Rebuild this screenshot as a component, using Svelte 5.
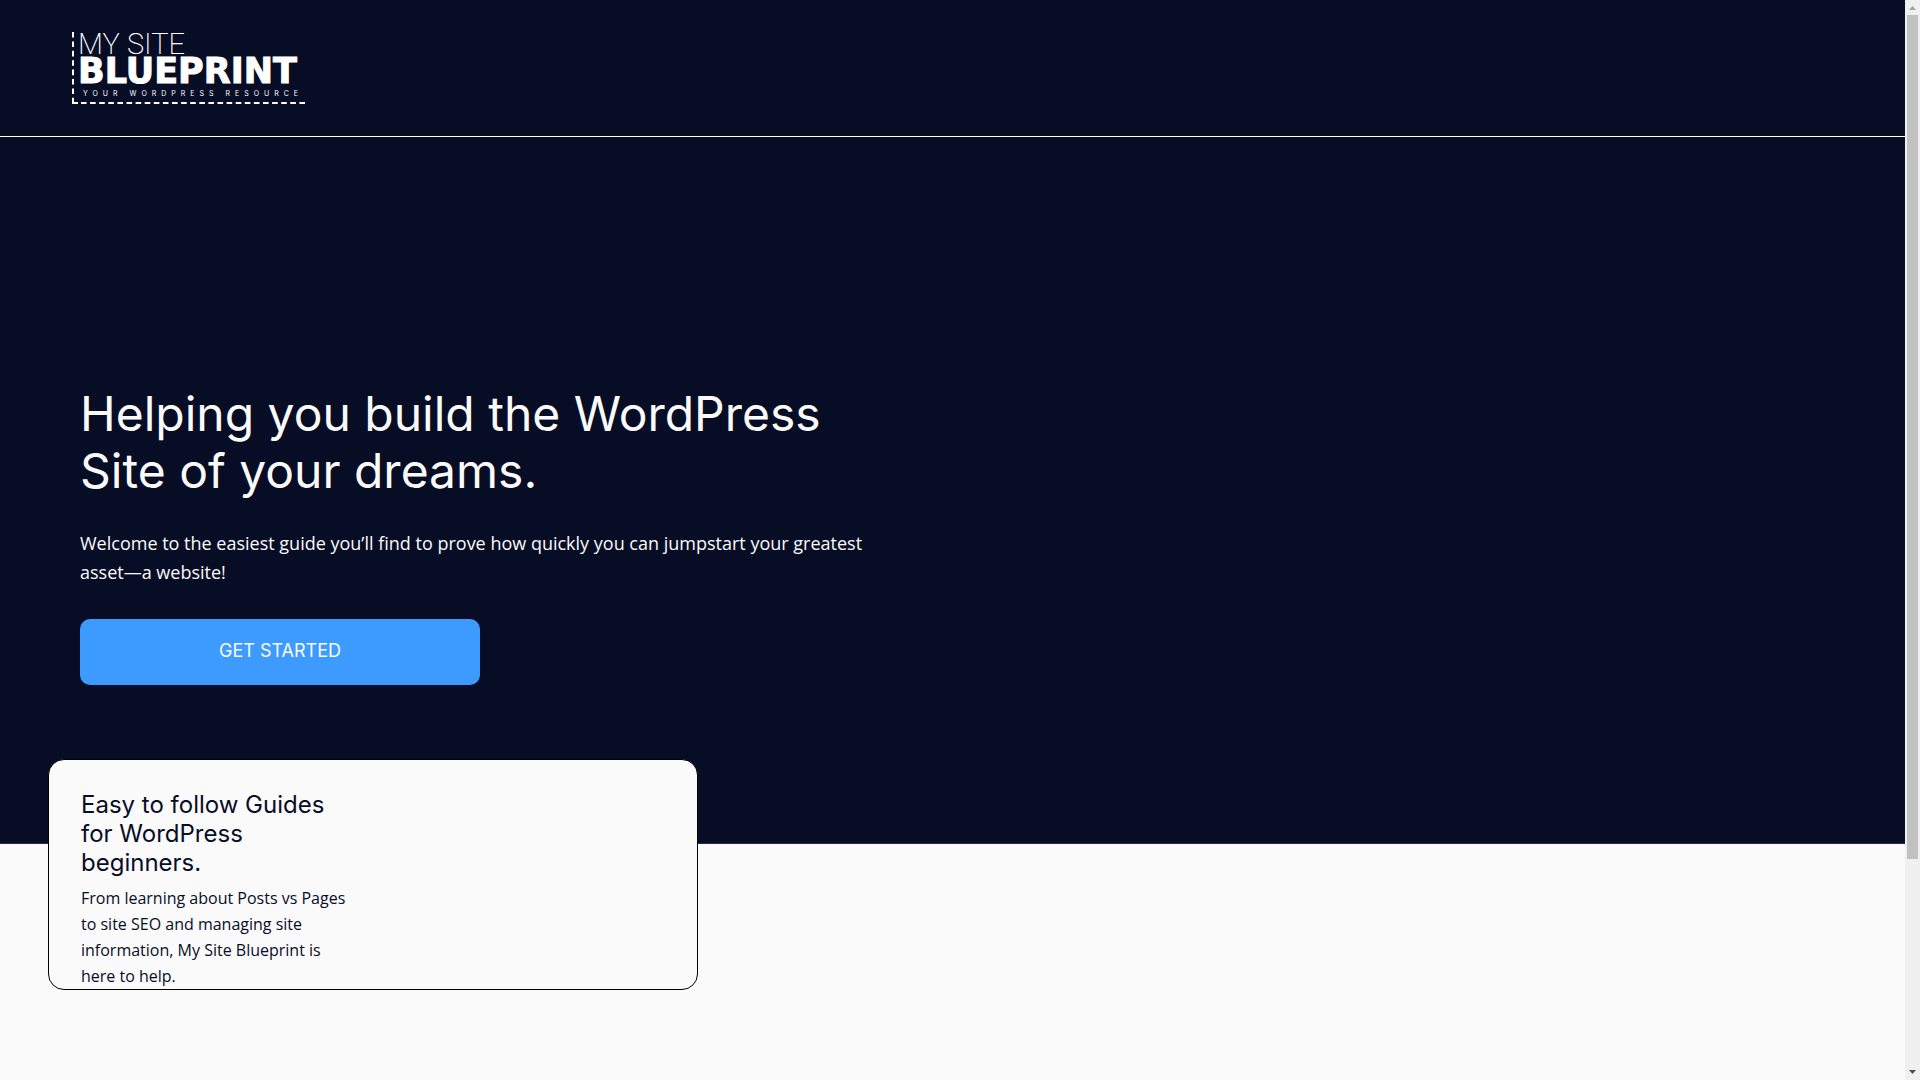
<script>
	const menuLabel = 'My Site Blueprint, your WordPress resource';

	let guides = [
		{
			title: 'Easy to follow Guides for WordPress beginners.',
			text: 'From learning about Posts vs Pages to site SEO and managing site information, My Site Blueprint is here to help.'
		}
	];
</script>

<div class="window">
	<div class="page">
		<header>
			<a href="/" aria-label={menuLabel}>
				<svg class="logo" width="234" height="72" viewBox="0 0 234 72">
					<g stroke="#fff" stroke-width="2" fill="none">
						<path d="M1 0V66" stroke-dasharray="5.6 3.8" />
						<path d="M1 66V71H6" />
						<path d="M9 71H233" stroke-dasharray="5.6 3.5" />
					</g>
					<text class="thin" x="6" y="22">MY SITE</text>
					<text class="heavy" x="6" y="51">BLUEPRINT</text>
					<text class="tag" x="11" y="64">YOUR WORDPRESS RESOURCE</text>
				</svg>
			</a>
		</header>

		<section class="hero">
			<div class="intro">
				<h1>Helping you build the WordPress Site of your dreams.</h1>
				<p>Welcome to the easiest guide you’ll find to prove how quickly you can jumpstart your greatest asset—a website!</p>
				<button>GET STARTED</button>
			</div>
		</section>

		<section class="guides">
			{#each guides as guide}
				<article>
					<div class="copy">
						<h2>{guide.title}</h2>
						<p>{guide.text}</p>
					</div>
				</article>
			{/each}
		</section>
	</div>

	<div class="scrollbar" aria-hidden="true">
		<svg width="15" height="15" viewBox="0 0 15 15"><path d="M4 10L7.5 6L11 10Z" fill="#a3a3a3" /></svg>
		<div class="track">
			<div class="thumb"></div>
		</div>
		<svg width="15" height="15" viewBox="0 0 15 15"><path d="M4 5L7.5 9L11 5Z" fill="#505050" /></svg>
	</div>
</div>

<style>
	:global(body) {
		margin: 0;
		background-color: #fafafa;
	}

	.window {
		display: flex;
		height: 100vh;
		overflow: hidden;
		font-family: 'Open Sans', sans-serif;
		color: #080d26;
	}

	.page {
		flex: 1;
		min-width: 0;
		background-color: #fafafa;
	}

	header {
		padding: 32px 72px;
		background-color: #080d26;
		border-bottom: 1px solid #fff;
	}

	header a {
		display: block;
		width: fit-content;
	}

	.logo {
		display: block;
		overflow: visible;
		fill: #fff;
		font-family: Inter, sans-serif;
	}

	.thin {
		font-family: Roboto, sans-serif;
		font-size: 29px;
		font-weight: 200;
	}

	.heavy {
		font-family: 'DejaVu Sans', sans-serif;
		font-size: 35px;
		font-weight: 700;
		stroke: #fff;
		stroke-width: 1px;
	}

	.tag {
		font-size: 7px;
		letter-spacing: 5px;
	}

	.hero {
		padding: 248px 80px 158px;
		background-color: #080d26;
		border-bottom: 1px solid #2b2750;
		color: #fafafa;
	}

	.intro {
		max-width: 800px;
	}

	h1,
	h2 {
		margin: 0;
		font-family: Inter, sans-serif;
		font-weight: 400;
	}

	h1 {
		font-size: 48px;
		line-height: 57px;
	}

	.intro p {
		margin: 30px 0 32px;
		font-size: 18px;
		line-height: 29px;
	}

	button {
		display: block;
		width: 50%;
		padding: 20px 20px 22px;
		border: 0;
		border-radius: 10px;
		background-color: #3d9bff;
		color: #fafafa;
		font-family: Inter, sans-serif;
		font-size: 18px;
		line-height: 24px;
		cursor: pointer;
	}

	/* the cards are pulled up over the bottom edge of the hero */
	.guides {
		position: relative;
		margin-top: -85px;
		padding: 0 48px;
	}

	article {
		box-sizing: border-box;
		max-width: 650px;
		padding: 30px 32px 0;
		border: 1px solid #000;
		border-radius: 16px;
		background-color: #fafafa;
	}

	.copy {
		max-width: 270px;
	}

	h2 {
		font-size: 24px;
		line-height: 29px;
	}

	.copy p {
		margin: 8px 0 0;
		font-size: 16px;
		line-height: 26px;
	}

	.scrollbar {
		display: flex;
		flex-direction: column;
		width: 15px;
		background-color: #f0f0f0;
	}

	.track {
		flex: 1;
		padding: 0 2px;
	}

	.thumb {
		height: 80.4%;
		background-color: #c1c1c1;
	}
</style>
